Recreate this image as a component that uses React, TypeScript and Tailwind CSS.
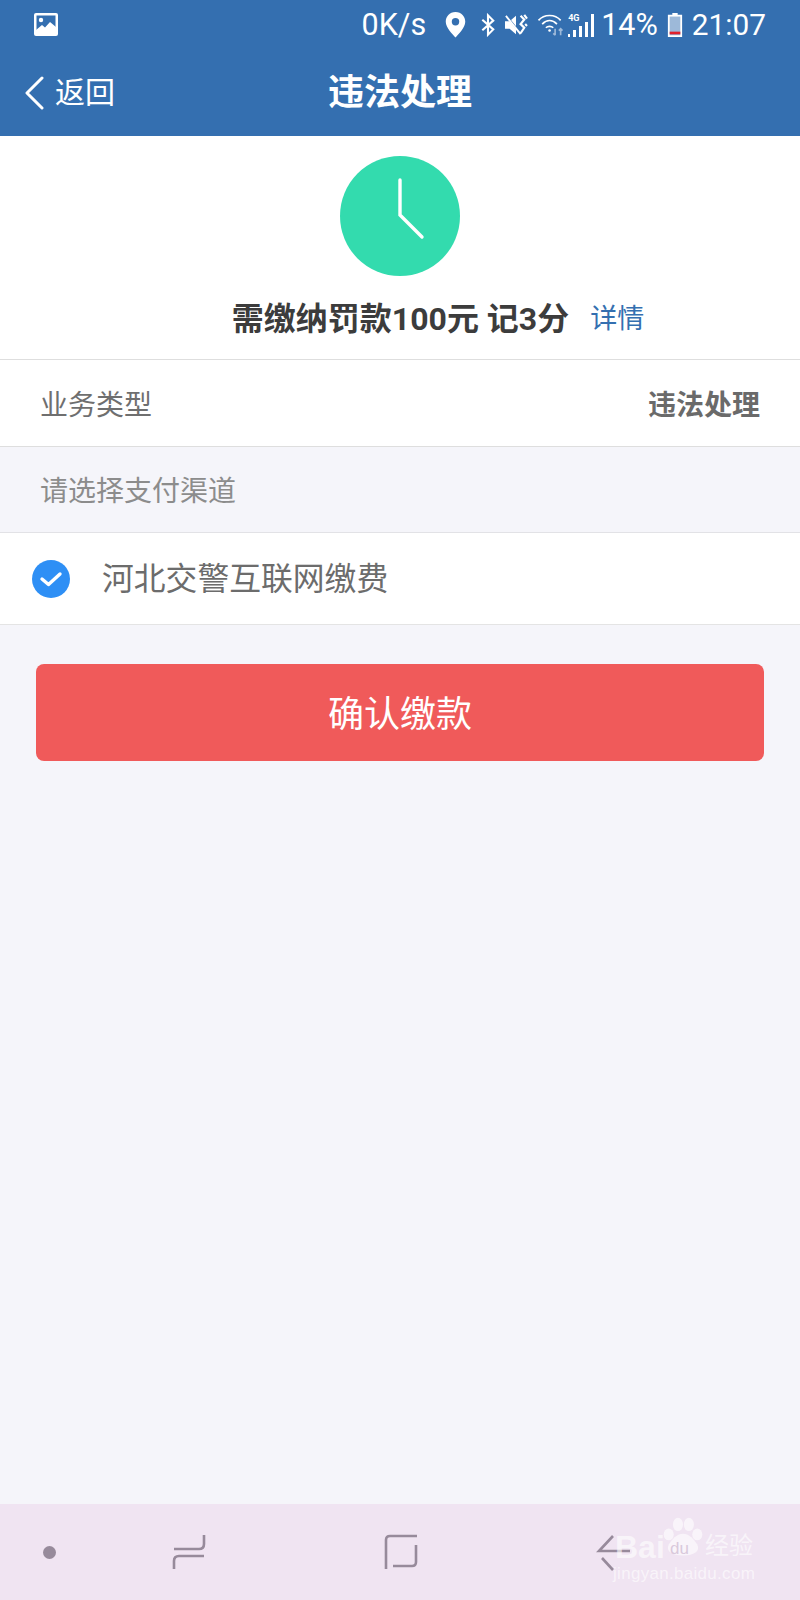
const CJK = "font-['Roboto','Noto_Sans_CJK_SC',sans-serif]";

function StatusBar() {
  return (
    <div className="h-[50px] flex items-center justify-between pl-[34px] pr-[34px] text-white">
      <svg width="24" height="24" viewBox="0 0 24 24">
        <rect x="0" y="0" width="24" height="23" rx="2" fill="#fff" />
        <rect x="2.5" y="2.5" width="19" height="18" fill="#346fb0" />
        <circle cx="7" cy="7" r="2.2" fill="#fff" />
        <path d="M2 21 L2 17 L8 12 L11 14.5 L16 9 L22 14 L22 21 Z" fill="#fff" />
      </svg>
      <div className="flex items-center">
        <span className="font-['Roboto'] text-[30.5px] leading-none">0K/s</span>
        <svg className="ml-[19px]" width="21" height="26" viewBox="0 0 22 28">
          <path d="M11 0 C4.5 0 0.5 5 0.5 10.5 C0.5 17 8 24 11 27.5 C14 24 21.5 17 21.5 10.5 C21.5 5 17.5 0 11 0 Z" fill="#fff" />
          <circle cx="11" cy="10.5" r="4" fill="#346fb0" />
        </svg>
        <svg className="ml-[15px]" width="14" height="24" viewBox="0 0 16 26" fill="none" stroke="#fff" strokeWidth="2.4">
          <path d="M1.5 7 L14 18 L8 24 L8 2 L14 8 L1.5 19" />
        </svg>
        <svg className="ml-[9px]" width="24" height="22" viewBox="0 0 26 24" fill="none">
          <path d="M1 8 H6 L13 2 V22 L6 16 H1 Z" fill="#fff" />
          <path d="M1 0 L17 20" stroke="#346fb0" strokeWidth="2" />
          <path d="M2 2 L18 22" stroke="#fff" strokeWidth="2" />
          <path d="M18 2 L22 6 L18 11 L22 15 L18 21 M22 1 L25 5 M23 11 L25 13" stroke="#fff" strokeWidth="2.4" />
        </svg>
        <svg className="ml-[8px]" width="29" height="24" viewBox="0 0 28 26" fill="none" stroke="#fff" strokeWidth="1.8">
          <path d="M1 8 C7 1 19 1 25 8" />
          <path d="M5 12 C10 7 16 7 21 12" />
          <path d="M9 16 C11 14 15 14 17 16" />
          <circle cx="13" cy="19" r="1.4" fill="#fff" stroke="none" />
          <path d="M19 17 V24 M17 22 L19 24" stroke="#9db9d9" />
          <path d="M25 24 V17 M23 19 L25 17 L27 19" stroke="#9db9d9" />
        </svg>
        <div className="relative w-[25px] h-[23px] ml-[3px]">
          <span className="absolute left-0 top-0 font-['Roboto'] text-[9px] font-bold leading-[9px]">4G</span>
          <div className="absolute left-0 bottom-0 flex items-end gap-[3px]">
            <span className="w-[2px] h-[3px] bg-white" />
            <span className="w-[3px] h-[7px] bg-white" />
            <span className="w-[3px] h-[11px] bg-white" />
            <span className="w-[3px] h-[15px] bg-white" />
            <span className="w-[3px] h-[23px] bg-white" />
          </div>
        </div>
        <span className="ml-[8px] font-['Roboto'] text-[30.5px] leading-none">14%</span>
        <svg className="ml-[9px]" width="16" height="24" viewBox="0 0 18 27" preserveAspectRatio="none">
          <path d="M6 0 H12 V2 H17 V27 H1 V2 H6 Z" fill="#fff" />
          <rect x="3" y="4" width="12" height="21" fill="#9db9d9" />
          <rect x="3" y="21" width="12" height="3" fill="#e0202c" />
        </svg>
        <span className="ml-[9px] font-['Roboto'] text-[29.8px] leading-none">21:07</span>
      </div>
    </div>
  );
}

function Header() {
  return (
    <div className="relative h-[86px] flex items-center justify-center">
      <div className="absolute left-[24px] top-[26px] flex items-center text-white">
        <svg width="20" height="34" viewBox="0 0 20 34" fill="none" stroke="#fff" strokeWidth="3" strokeLinecap="round" strokeLinejoin="round">
          <path d="M18 2 L3 17 L18 32" />
        </svg>
        <span className={`ml-[11px] text-[30px] leading-none ${CJK}`}>返回</span>
      </div>
      <span className={`text-white text-[36px] font-bold leading-none ${CJK}`}>违法处理</span>
    </div>
  );
}

function NavBar() {
  return (
    <div className="relative h-[96px] mt-auto bg-[#f0e4f2] flex items-start">
      <span className="absolute left-[43px] top-[42px] w-[13px] h-[13px] rounded-full bg-[#978a9b]" />
      <svg className="absolute left-[172px] top-[30px]" width="34" height="36" viewBox="0 0 34 36" fill="none" stroke="#978a9b" strokeWidth="2.6">
        <path d="M2 15 H27 Q32 15 32 10 V1" />
        <path d="M32 22 H7 Q2 22 2 27 V35" />
      </svg>
      <svg className="absolute left-[384px] top-[30px]" width="34" height="36" viewBox="0 0 34 36" fill="none" stroke="#978a9b" strokeWidth="2.6">
        <path d="M2 35 V6 Q2 2 6 2 H33" />
        <path d="M32 11 V28 Q32 32 28 32 H9" />
      </svg>
      <svg className="absolute left-[596px] top-[30px]" width="36" height="38" viewBox="0 0 36 38" fill="none" stroke="#978a9b" strokeWidth="2.6">
        <path d="M17 2 L3 17 H34" />
        <path d="M6 24 L17 36" />
      </svg>
      {/* baidu watermark */}
      <div className="absolute left-[612px] top-[10px] w-[188px] h-[80px] text-white/60">
        <span className="absolute left-[3px] top-[17px] font-['Liberation_Sans'] font-bold text-[32px] leading-none">Bai</span>
        <svg className="absolute left-[50px] top-0" width="42" height="46" viewBox="0 0 50 46" fill="#fff" fillOpacity="0.6">
          <ellipse cx="8" cy="20" rx="6" ry="7" />
          <ellipse cx="19" cy="8" rx="6" ry="8" />
          <ellipse cx="32" cy="8" rx="6" ry="8" />
          <ellipse cx="42" cy="20" rx="6" ry="7" />
          <path d="M25 19 C17 19 12 26 8 32 C4 40 12 45 25 45 C38 45 46 40 42 32 C38 26 33 19 25 19 Z" />
        </svg>
        <span className="absolute left-[58px] top-[26px] font-['Liberation_Sans'] text-[17px] leading-none text-[#d9c9dc]">du</span>
        <span className={`absolute left-[93px] top-[20px] text-[24px] leading-none ${CJK}`}>经验</span>
        <span className="absolute left-[1px] top-[51px] font-['Liberation_Sans'] text-[17px] tracking-[0.3px] leading-none">jingyan.baidu.com</span>
      </div>
    </div>
  );
}

export default function App() {
  return (
    <div className={`w-[800px] h-[1600px] flex flex-col bg-[#f5f5fa] ${CJK}`}>
      <div className="bg-[#346fb0]">
        <StatusBar />
        <Header />
      </div>

      <div className="h-[224px] bg-white border-b border-[#dedede] flex flex-col items-center">
        <div className="mt-[20px] w-[120px] h-[120px] rounded-full bg-[#33dbae] flex items-center justify-center">
          <svg width="120" height="120" viewBox="0 0 120 120" fill="none" stroke="#fff" strokeWidth="3.4" strokeLinecap="round">
            <path d="M60 24 V59 L82 81" />
          </svg>
        </div>
        <div className="mt-[24px] ml-[76px] flex items-center">
          <span className="text-[32px] font-bold text-[#3c3c3c] leading-[38px]">需缴纳罚款100元 记3分</span>
          <span className="ml-[21px] text-[27px] text-[#346fb0] leading-[38px]">详情</span>
        </div>
      </div>

      <div className="h-[87px] bg-white border-b border-[#dedede] flex items-center justify-between pl-[40px] pr-[40px] pt-[5px]">
        <span className="text-[28px] text-[#6f6f6f]">业务类型</span>
        <span className="text-[28px] font-bold text-[#6a6a6a]">违法处理</span>
      </div>

      <div className="h-[86px] border-b border-[#e2e2e6] flex items-center pl-[40px] pt-[5px]">
        <span className="text-[28px] text-[#8c8c8c]">请选择支付渠道</span>
      </div>

      <div className="h-[92px] bg-white border-b border-[#e4e4e4] flex items-center pl-[32px]">
        <svg width="38" height="38" viewBox="0 0 38 38">
          <circle cx="19" cy="19" r="19" fill="#2e8ff5" />
          <path d="M10 19 L16.5 24.5 L28 14" fill="none" stroke="#fff" strokeWidth="3.4" strokeLinecap="round" strokeLinejoin="round" />
        </svg>
        <span className="ml-[32px] mt-[2px] text-[31.8px] text-[#6c6c6c] leading-none">河北交警互联网缴费</span>
      </div>

      <button className="mt-[39px] mx-[36px] h-[97px] rounded-[8px] bg-[#f05a5a] text-white text-[36px] pt-[5px] flex items-center justify-center">
        确认缴款
      </button>

      <NavBar />
    </div>
  );
}
